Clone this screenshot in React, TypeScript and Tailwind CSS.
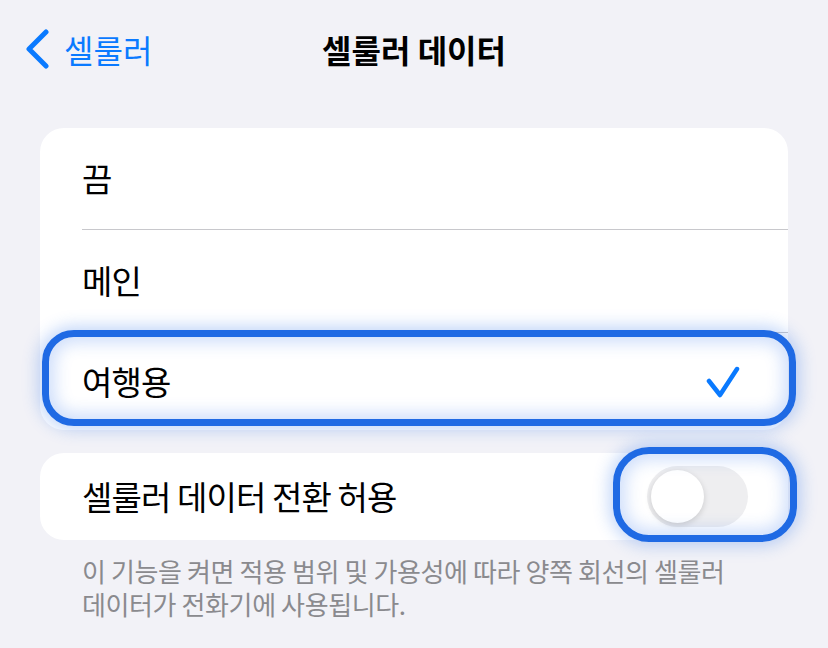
const ko = { fontFamily: '"Noto Sans CJK KR", "Noto Sans", sans-serif' }

function Highlight({ className }: { className: string }) {
  return (
    <div
      className={`pointer-events-none absolute border-[7px] border-[#1f6ae4] shadow-[0_0_16px_4px_rgba(40,110,235,0.28),inset_0_0_16px_6px_rgba(40,110,235,0.22)] ${className}`}
    />
  )
}

export default function App() {
  return (
    <div style={ko} className="w-[828px] h-[648px] overflow-hidden bg-[#f2f2f7] text-black">
      {/* nav */}
      <div className="grid grid-cols-[1fr_auto_1fr] items-center h-[98px] px-[26px]">
        <div className="flex items-center gap-[14px] text-[#0a7aff]">
          <svg width="24" height="40" viewBox="0 0 24 40" fill="none">
            <path d="M20 3 L3 20 L20 37" stroke="#0a7aff" strokeWidth="5" strokeLinecap="round" strokeLinejoin="round" />
          </svg>
          <span className="text-[32px] leading-none">셀룰러</span>
        </div>
        <h1 className="text-[32px] font-bold leading-none">셀룰러 데이터</h1>
        <div />
      </div>

      {/* options */}
      <div className="relative mx-[40px] mt-[30px] rounded-[24px] bg-white">
        <div className="h-[101px] flex items-center pl-[42px]">
          <span className="text-[33px] tracking-[-0.026em]">끔</span>
        </div>
        <div className="ml-[42px] h-px bg-[#c8c8cc]" />
        <div className="h-[102px] flex items-center pl-[42px]">
          <span className="text-[33px] tracking-[-0.026em]">메인</span>
        </div>
        <div className="ml-[42px] h-px bg-[#c8c8cc]" />
        <div className="h-[97px] flex items-center justify-between pl-[42px] pr-[48px]">
          <span className="text-[33px] tracking-[-0.026em]">여행용</span>
          <svg width="34" height="32" viewBox="0 0 34 32" fill="none">
            <path d="M3 15 L14 29 L31 3" stroke="#0a7aff" strokeWidth="4.5" strokeLinecap="round" strokeLinejoin="round" />
          </svg>
        </div>
        <Highlight className="left-[2px] top-[202px] w-[754px] h-[96px] rounded-[32px]" />
      </div>

      {/* switch row */}
      <div className="relative mx-[40px] mt-[23px] h-[87px] rounded-[24px] bg-white flex items-center justify-between pl-[42px] pr-[40px]">
        <span className="text-[33px] tracking-[-0.026em]">셀룰러 데이터 전환 허용</span>
        <div className="w-[101px] h-[61px] rounded-full bg-[#eeeef0] p-[4px] flex items-center">
          <div className="w-[53px] h-[53px] rounded-full bg-white shadow-[0_2px_6px_rgba(0,0,0,0.15)]" />
        </div>
        <Highlight className="left-[573px] top-[-6px] w-[184px] h-[95px] rounded-[36px]" />
      </div>

      {/* footer */}
      <p className="mx-[82px] mt-[14px] text-[26px] leading-[33px] tracking-[-0.015em] text-[#8a8a8e]">
        이 기능을 켜면 적용 범위 및 가용성에 따라 양쪽 회선의 셀룰러
        <br />
        데이터가 전화기에 사용됩니다.
      </p>
    </div>
  )
}
